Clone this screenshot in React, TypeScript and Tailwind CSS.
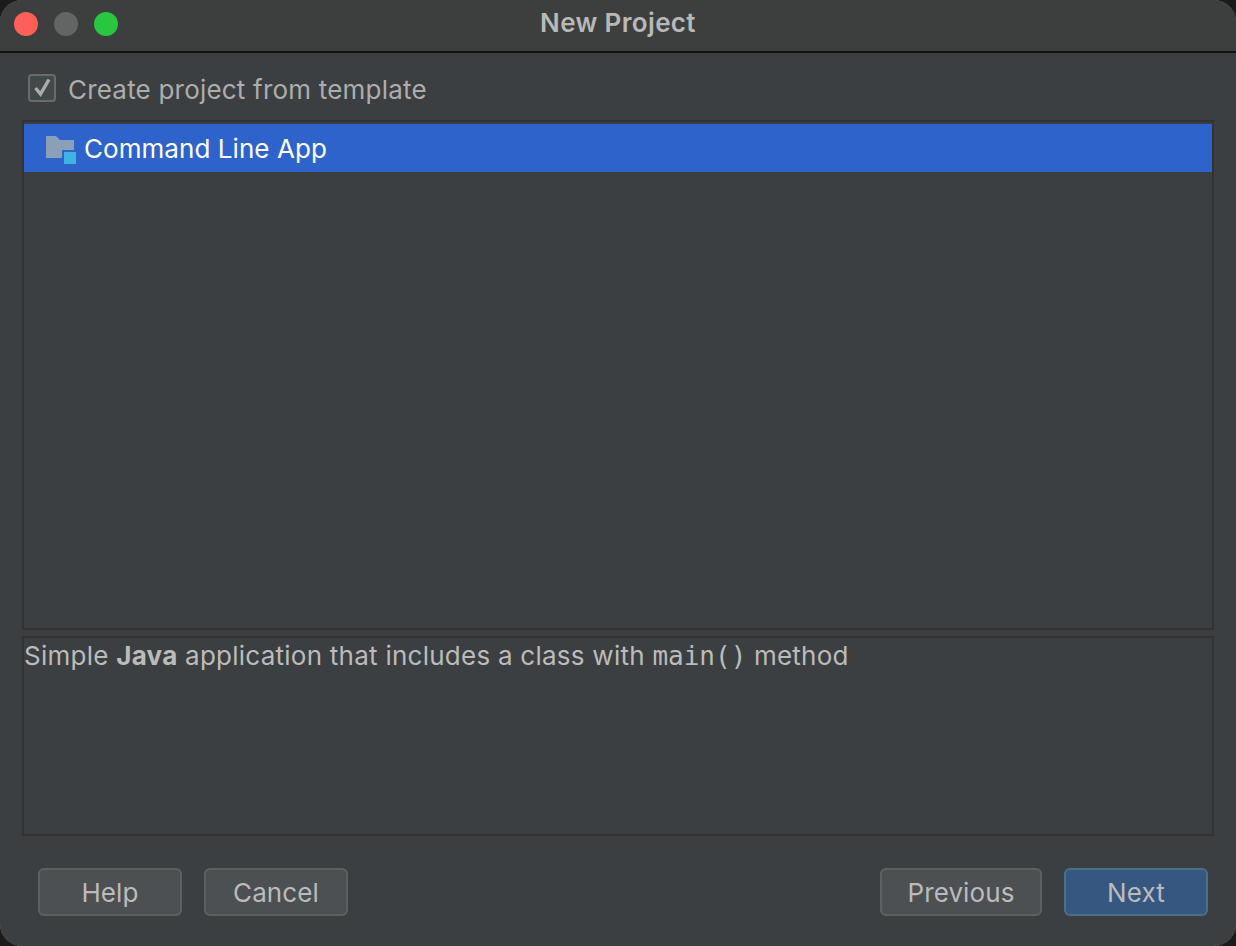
import type { ReactNode } from 'react'

function Btn({ children, primary, width }: { children: ReactNode; primary?: boolean; width: string }) {
  return (
    <button
      className={`h-12 ${width} pt-[2px] rounded-md border-2 text-[26px] leading-none text-[#bbbbbb] tracking-[0.1px] ${
        primary ? 'bg-[#365880] border-[#4c708c]' : 'bg-[#4c5052] border-[#5e6060]'
      }`}
    >
      {children}
    </button>
  )
}

function FolderIcon() {
  return (
    <svg width="30" height="28" viewBox="0 0 30 28" className="shrink-0 mt-1">
      <path d="M0 0h10l4 4h14v10H16v8H0z" fill="#8c9fb9" />
      <rect x="18" y="16" width="12" height="12" fill="#3fb4e3" />
    </svg>
  )
}

export default function App() {
  return (
    <div className="w-[1236px] h-[946px] bg-[#1b1b1c] font-['Inter',sans-serif] overflow-hidden">
      <div className="h-full rounded-[22px] overflow-hidden bg-[#77797a]">
        <div className="h-full flex flex-col rounded-[20px] overflow-hidden bg-[#3c3f41]">
          <div className="h-[53px] shrink-0 relative flex items-center justify-center pb-[6px] bg-[#3d3f3e] border-b-2 border-[#111111]">
            <div className="absolute left-[14px] top-3 flex gap-4">
              <span className="w-6 h-6 rounded-full bg-[#fe5f57]" />
              <span className="w-6 h-6 rounded-full bg-[#636464]" />
              <span className="w-6 h-6 rounded-full bg-[#29c73f]" />
            </div>
            <span className="text-[26px] font-semibold text-[#b8b8b8] tracking-[0.35px]">New Project</span>
          </div>

          <div className="flex-1 flex flex-col px-[22px]">
            <div className="h-[67px] shrink-0 flex items-center gap-3 pl-[6px] pt-[3px]">
              <span className="w-7 h-7 rounded-[4px] border-2 border-[#6b6b6b] bg-[#43494a] flex items-center justify-center">
                <svg width="20" height="20" viewBox="0 0 20 20" fill="none">
                  <path d="M3.5 10l5 6L17 1.5" stroke="#a9abac" strokeWidth="3.4" />
                </svg>
              </span>
              <span className="mt-[2px] text-[26px] text-[#adadad] tracking-[0.2px]">Create project from template</span>
            </div>

            <div className="h-[510px] shrink-0 border-2 border-[#323232]">
              <div className="h-12 mt-[2px] flex items-center gap-2 pl-[22px] bg-[#2d63cb]">
                <FolderIcon />
                <span className="text-[26px] text-white tracking-[0.06px]">Command Line App</span>
              </div>
            </div>

            <div className="h-[200px] mt-[6px] shrink-0 border-2 border-[#323232] text-[26px] leading-9 text-[#bbbbbb] tracking-[0.25px]">
              Simple <b>Java</b> application that includes a class with{' '}
              <code className="font-['DejaVu_Sans_Mono',monospace] text-[26px] tracking-normal">main()</code> method
            </div>

            <div className="flex justify-between pl-4 pr-[6px] pt-8">
              <div className="flex gap-[22px]">
                <Btn width="w-[144px]">Help</Btn>
                <Btn width="w-[144px]">Cancel</Btn>
              </div>
              <div className="flex gap-[22px]">
                <Btn width="w-[162px]">Previous</Btn>
                <Btn width="w-[144px]" primary>Next</Btn>
              </div>
            </div>
          </div>
        </div>
      </div>
    </div>
  )
}
